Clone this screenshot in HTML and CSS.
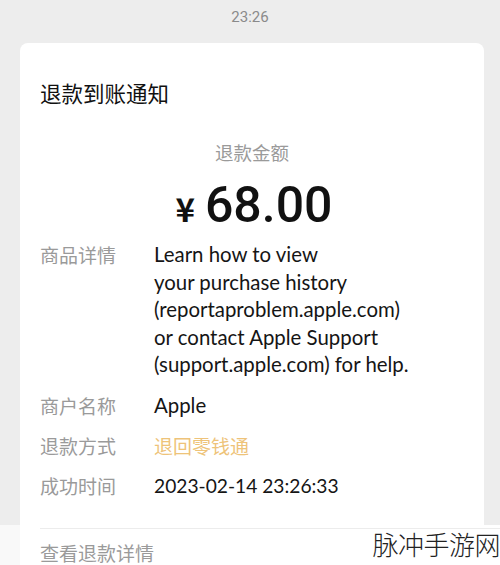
FILE: index.html
```html
<!DOCTYPE html>
<html lang="zh">
<head>
<meta charset="utf-8">
<link rel="stylesheet" href="styles.css">
</head>
<body>
<div class="time">23:26</div>
<div class="card">
  <div class="title">退款到账通知</div>
  <div class="amount-label">退款金额</div>
  <div class="amount"><span class="yen">¥</span><span class="num">68.00</span></div>
  <div class="row first">
    <div class="label">商品详情</div>
    <div class="value">Learn how to view<br>your purchase history<br>(reportaproblem.apple.com)<br>or contact Apple Support<br>(support.apple.com) for help.</div>
  </div>
  <div class="row">
    <div class="label">商户名称</div>
    <div class="value">Apple</div>
  </div>
  <div class="row">
    <div class="label">退款方式</div>
    <div class="value orange">退回零钱通</div>
  </div>
  <div class="row">
    <div class="label">成功时间</div>
    <div class="value date">2023-02-14 23:26:33</div>
  </div>
</div>
<div class="footer">
  <div class="footer-inner">
    <div class="divider"></div>
    <div class="link">查看退款详情</div>
  </div>
  <div class="watermark">脉冲手游网</div>
</div>
</body>
</html>
```
FILE: styles.css
```css
html, body {
  margin: 0;
  padding: 0;
}
body {
  background: #ededed;
  font-family: "Noto Sans CJK SC", "Noto Sans", sans-serif;
  width: 500px;
  height: 565px;
  overflow: hidden;
  position: relative;
}
.time {
  height: 43px;
  line-height: 34px;
  text-align: center;
  font-family: "Roboto", "Noto Sans CJK SC", sans-serif;
  font-size: 15px;
  color: #8a8a8a;
}
.card {
  background: #fff;
  margin: 0 16px 0 20px;
  border-radius: 8px 8px 0 0;
  padding: 35px 20px 27px 20px;
  height: 482px;
  box-sizing: border-box;
}
.title {
  font-size: 21.5px;
  line-height: 30px;
  color: #111;
}
.amount-label {
  margin-top: 30px;
  text-align: center;
  font-size: 18.5px;
  line-height: 28px;
  color: #9a9a9a;
}
.amount {
  margin-top: 11px;
  height: 56px;
  display: flex;
  justify-content: center;
  align-items: baseline;
  color: #111;
  font-family: "Roboto", sans-serif;
  font-weight: 500;
}
.yen {
  font-size: 33px;
  margin-right: 14px;
  line-height: 56px;
  font-family: "Noto Sans CJK SC", sans-serif;
  font-weight: 700;
  position: relative;
  left: 4px;
}
.num {
  font-size: 50px;
  line-height: 56px;
}
.row {
  display: flex;
  margin-top: 12.5px;
}
.row.first {
  margin-top: 8px;
}
.row:nth-child(5) {
  margin-top: 13px;
}
.label {
  width: 114px;
  flex: none;
  font-size: 19px;
  line-height: 27.5px;
  color: #9a9a9a;
}
.value {
  font-family: "Lato", "Noto Sans CJK SC", sans-serif;
  font-size: 20.4px;
  line-height: 27.5px;
  color: #151515;
}
.value.date {
  font-size: 19.2px;
}
.value.orange {
  font-family: "Noto Sans CJK SC", sans-serif;
  font-size: 19px;
  color: #eec379;
}
.footer {
  background: #f9f9f9;
  height: 40px;
}
.footer-inner {
  margin-left: 20px;
  background: #fff;
  height: 40px;
  padding: 3px 0 0 20px;
  box-sizing: border-box;
}
.divider {
  height: 1px;
  background: #ececec;
}
.link {
  margin-top: 11px;
  font-size: 19px;
  line-height: 26px;
  color: #9a9a9a;
}
.watermark {
  position: absolute;
  right: 0;
  bottom: 5px;
  font-size: 26px;
  font-weight: 300;
  color: #222;
  line-height: 32px;
  letter-spacing: -0.5px;
}
```
